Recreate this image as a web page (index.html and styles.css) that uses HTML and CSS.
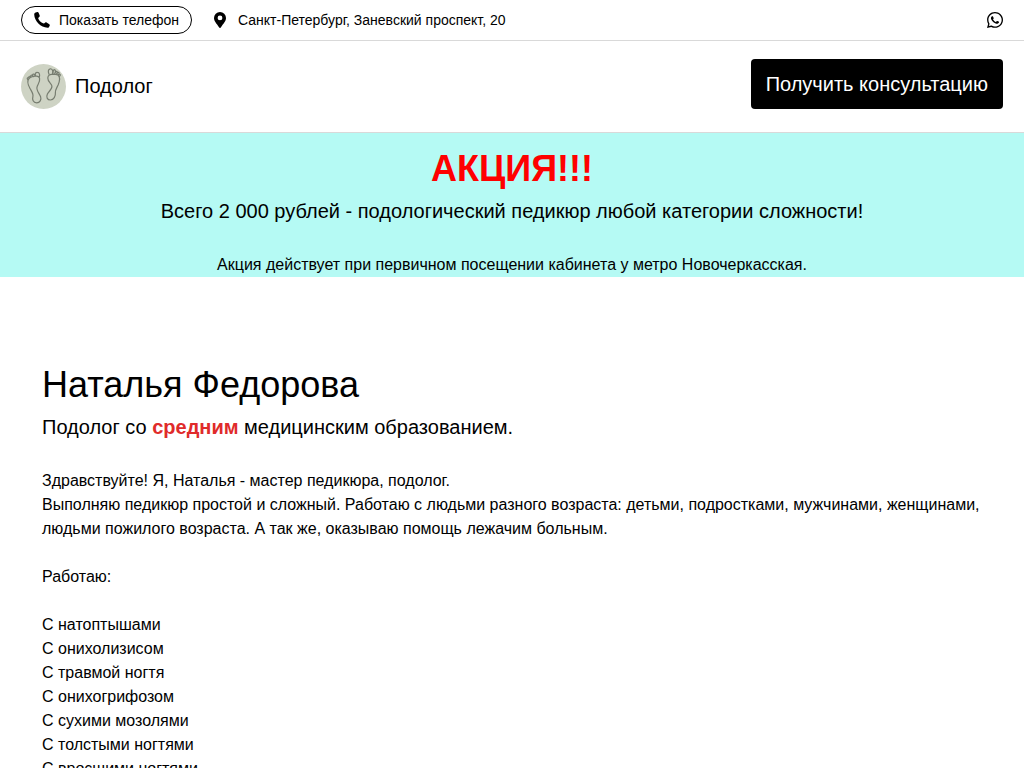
FILE: index.html
```html
<!DOCTYPE html>
<html lang="ru">
<head>
<meta charset="utf-8">
<meta name="viewport" content="width=device-width, initial-scale=1">
<title>Подолог</title>
<link rel="stylesheet" href="styles.css">
</head>
<body>
<div class="topbar">
  <button class="phone" type="button">
    <svg class="phone-icon" viewBox="0 0 16 16" aria-hidden="true"><path d="M1.700.5 3.300.1c.6-.1 1 .1 1.300.7l1.100 2.700c.2.5.1 1-.3 1.300L4.200 5.900c.4 2.400 3.300 5.200 5.800 5.500l1.300-.9c.4-.3.9-.3 1.300 0l2.700 1.700c.6.4.7.9.4 1.500l-.7 1.200c-.3.6-.7.8-1.400.8C6.600 15.400.5 9.200.2 2.500.2 1.300.7.800 1.700.5z"/></svg>
    <span>Показать телефон</span>
  </button>
  <address class="place">
    <svg class="pin-icon" viewBox="0 0 12 16" aria-hidden="true"><path fill-rule="evenodd" d="M6 0a6 6 0 0 1 6 6c0 3-2.300 5.200-5.200 9.500a1 1 0 0 1-1.600 0C2.300 11.200 0 9 0 6a6 6 0 0 1 6-6zm0 3.500a2.400 2.400 0 1 0 0 4.800 2.400 2.400 0 0 0 0-4.800z"/></svg>
    <span>Санкт-Петербург, Заневский проспект, 20</span>
  </address>
  <a class="chat" href="#whatsapp" aria-label="WhatsApp">
    <svg class="chat-icon" viewBox="0 0 448 448" aria-hidden="true"><path d="M380.900 65.100C339 23.100 283.200 0 223.900 0 101.500 0 1.900 99.600 1.900 222c0 39.100 10.200 77.300 29.600 111L0 448l117.700-30.900c32.400 17.700 68.900 27 106.100 27h.1c122.300 0 224.100-99.600 224.100-222 0-59.300-25.200-115-67.100-157zM223.900 406.700c-33.200 0-65.700-8.900-94-25.700l-6.700-4-69.800 18.300L72 327.200l-4.400-7c-18.500-29.400-28.200-63.300-28.200-98.200 0-101.700 82.800-184.500 184.600-184.500 49.300 0 95.600 19.200 130.400 54.100 34.800 34.900 56.200 81.200 56.100 130.500 0 101.800-84.900 184.600-186.600 184.600zm101.200-138.200c-5.500-2.800-32.800-16.200-37.900-18-5.100-1.900-8.800-2.800-12.500 2.800-3.700 5.600-14.300 18-17.600 21.800-3.200 3.700-6.500 4.200-12 1.400-32.600-16.300-54-29.100-75.500-66-5.700-9.800 5.700-9.100 16.300-30.300 1.800-3.700.9-6.900-.5-9.700-1.400-2.800-12.500-30.100-17.100-41.200-4.500-10.800-9.100-9.300-12.500-9.500-3.200-.2-6.900-.2-10.600-.2-3.700 0-9.700 1.400-14.800 6.900-5.100 5.600-19.400 19-19.400 46.300 0 27.300 19.900 53.700 22.600 57.400 2.800 3.700 39.100 59.700 94.800 83.800 35.200 15.200 49 16.500 66.600 13.900 10.700-1.600 32.800-13.400 37.400-26.400 4.600-13 4.600-24.100 3.200-26.400-1.300-2.500-5-3.900-10.500-6.600z"/></svg>
  </a>
</div>
<header class="header">
  <a class="brand" href="#home">
    <svg class="logo" viewBox="0 0 45 45" aria-hidden="true">
      <circle class="logo-disc" cx="22.500" cy="22.500" r="22.500"/>
      <g class="feet">
        <path d="M8 14.500C5.800 17 7 21 9 24.500c1.700 3 3.600 5.500 2.900 8-.8 2.700.2 6.300 3.700 6.300 3.400 0 5-3.200 4-6-1-3-4.500-6.300-3.600-9.800.5-2.200 3.300-5 2.600-8.500-.4-2.200-2.200-2.700-4.400-2.300-2.500.3-4.800.6-6.200 2.300z"/>
        <path d="M14.500 11.500c-.8-2.200.4-3.300 2-3.100 2 .2 2.400 2.200 1.900 4.600M14 11.700c-.4-1.700-1.800-2.300-2.400-.9-.2 1 .3 1.500.8 1.900M11.500 11.500c-1.300-.8-2.200.1-1.700 1.400M9.400 12.300c-1.400-.3-2 .6-1.300 1.600M7.500 13.500c-1.400-.1-1.600 1-.8 2"/>
        <path d="M37 11c2.500 2 1.700 6 .1 10-1.300 3-3 5-2.700 7.500.4 3.500-1.700 7.500-5 7.500-3.200 0-4.400-3-3-6 1.400-2.700 5-5 4.500-8-.4-2.500-4.200-4-4.100-8 .1-3 2.300-4 4.800-3.600 2 .3 4.100-.5 5.400.6z"/>
        <path d="M31.500 9.500c.8-2.500-.4-5-2.300-4.700-2 .3-2.400 3-1.200 5.300M32 9.600c0-2.600.6-4.200 1.800-3.800 1 .5.800 2-.1 3.900M34.400 8.500c.7-1.600 1.800-1.500 1.900-.3 0 .8-.4 1.300-.9 1.700M36.500 9c1-1 1.900-.5 1.500.8l-.7 1M38.100 10.300c1.300-.4 1.700 1 .4 2"/>
      </g>
    </svg>
    <span>Подолог</span>
  </a>
  <button class="consult" type="button">Получить консультацию</button>
</header>
<section class="promo">
  <h2 class="promo-title">АКЦИЯ!!!</h2>
  <p class="lead">Всего 2 000 рублей - подологический педикюр любой категории сложности!</p>
  <p class="text">Акция действует при первичном посещении кабинета у метро Новочеркасская.</p>
</section>
<main class="about">
  <h1 class="name">Наталья Федорова</h1>
  <p class="lead">Подолог со <strong class="accent">средним</strong> медицинским образованием.</p>
  <p class="text">Здравствуйте! Я, Наталья - мастер педикюра, подолог.<br>Выполняю педикюр простой и сложный. Работаю с людьми разного возраста: детьми, подростками, мужчинами, женщинами, людьми пожилого возраста. А так же, оказываю помощь лежачим больным.</p>
  <p class="text">Работаю:</p>
  <ul class="services">
    <li>С натоптышами</li>
    <li>С онихолизисом</li>
    <li>С травмой ногтя</li>
    <li>С онихогрифозом</li>
    <li>С сухими мозолями</li>
    <li>С толстыми ногтями</li>
    <li>С вросшими ногтями</li>
  </ul>
</main>
</body>
</html>
```
FILE: styles.css
```css
* {
  box-sizing: border-box;
}

body {
  margin: 0;
  background: #fff;
  color: #000;
  font: 16px/24px "Liberation Sans", Arial, sans-serif;
}

h1, h2, p, ul {
  margin: 0;
  padding: 0;
  font-weight: 400;
}

svg {
  display: block;
  flex: none;
}

a {
  color: inherit;
  text-decoration: none;
}

button {
  border: 0;
  font-family: inherit;
  cursor: pointer;
}

.topbar {
  display: flex;
  align-items: center;
  gap: 22px;
  padding: 6px 21px;
  border-bottom: 1px solid #d9d9d9;
  font-size: 14px;
  line-height: 20px;
}

.phone {
  display: flex;
  align-items: center;
  gap: 9px;
  padding: 3px 12px;
  border: 1px solid #000;
  border-radius: 14px;
  background: #fff;
  color: #000;
  font-size: 14px;
  line-height: 20px;
}

.phone-icon {
  width: 16px;
  height: 16px;
}

.place {
  display: flex;
  align-items: center;
  gap: 12px;
  font-style: normal;
}

.pin-icon {
  width: 12px;
  height: 16px;
}

.chat {
  margin-left: auto;
}

.chat-icon {
  width: 16px;
  height: 16px;
}

.header {
  display: flex;
  align-items: center;
  justify-content: space-between;
  padding: 18px 21px 23px;
  border-bottom: 1px solid #d9d9d9;
}

.brand {
  display: flex;
  align-items: center;
  gap: 9px;
  padding-top: 5px;
  font-size: 20px;
  line-height: 25px;
}

.logo {
  width: 45px;
  height: 45px;
}

.logo-disc {
  fill: #ced3c4;
}

.feet {
  fill: none;
  stroke: #777d70;
  stroke-width: 1.2;
  stroke-linecap: round;
}

.consult {
  padding: 10px 15px;
  border-radius: 4px;
  background: #000;
  color: #fff;
  font-size: 20px;
  line-height: 30px;
}

.promo {
  padding: 12px 42px 0;
  background: #b5faf4;
  text-align: center;
}

.promo-title,
.name {
  font-size: 36px;
  line-height: 48px;
}

.promo-title {
  color: #f00;
  font-weight: 700;
}

.lead {
  margin: 4px 0 28px;
  font-size: 20px;
  line-height: 28px;
}

.about {
  padding: 84px 42px;
}

.accent {
  color: #e02b2b;
}

.about .text {
  margin-bottom: 24px;
}

.services {
  list-style: none;
}
```
